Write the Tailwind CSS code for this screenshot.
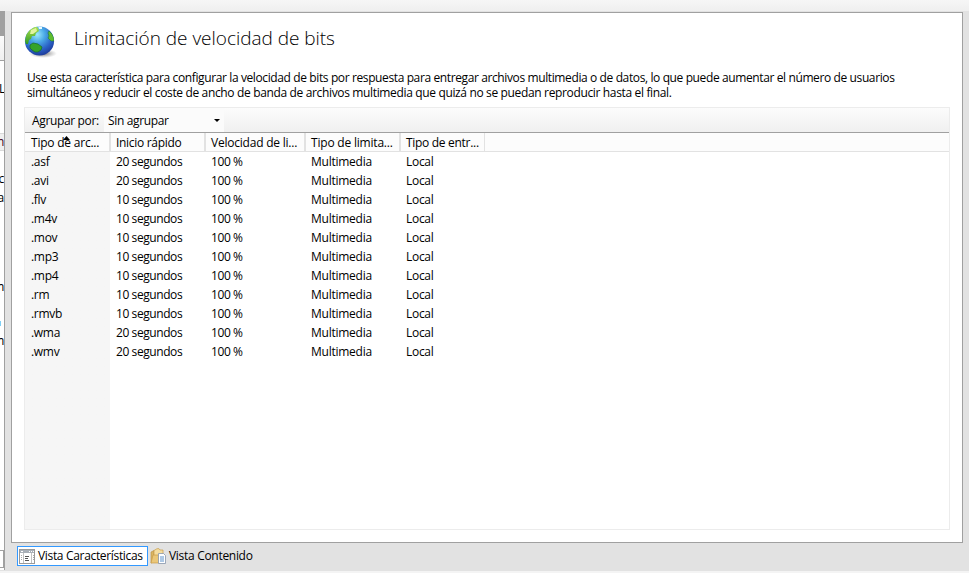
<!DOCTYPE html>
<html lang="es">
<head>
<meta charset="utf-8">
<title>Limitación de velocidad de bits</title>
<script src="https://cdn.jsdelivr.net/npm/@tailwindcss/browser@4"></script>
</head>
<body class="w-[969px] h-[573px] overflow-hidden bg-[#e2e2e2] text-black text-[12px] leading-[15px] font-['Open_Sans','Noto_Sans',sans-serif] tracking-[-0.3px] whitespace-nowrap flex flex-col">
<div class="h-[11px] shrink-0 bg-linear-to-b from-[#f6f6f6] to-[#efefef]"></div>
<div class="h-[560px] shrink-0 flex">
  <aside class="w-[5px] mr-[6px] h-[559px] shrink-0 border-r border-[#a0a0a0] bg-white overflow-hidden flex flex-col">
    <div class="h-[25px] shrink-0 bg-[#a0a0a0]"></div>
    <div class="h-[25px] shrink-0 bg-linear-to-b from-[#fcfcfc] to-[#f0f0f0] border-b border-[#a0a0a0]"></div>
    <div class="h-[72px] shrink-0 pt-[20px] -ml-px">L</div>
    <div class="h-[18px] shrink-0 bg-[#f0f0f0] border-y border-[#d9d9d9] flex justify-end text-[#400020]">n</div>
    <div class="h-[19px] mt-[20px] shrink-0 flex justify-end">c</div>
    <div class="h-[19px] shrink-0 flex justify-end">sa</div>
    <div class="h-[19px] mt-[70px] shrink-0 flex justify-end">m</div>
    <div class="w-[1px] h-[5px] mt-[23px] shrink-0 bg-[#7fd0f5]"></div>
    <div class="h-[19px] mt-[7px] shrink-0 flex justify-end">m</div>
    <div class="mt-auto h-[18px] w-[4px] mb-[2px] shrink-0 border border-l-0 border-[#a0a0a0]"></div>
  </aside>
  <div class="flex flex-col pt-px">
    <main class="w-[952px] h-[531px] bg-white border border-[#a0a0a0] pl-[12px] flex flex-col">
      <header class="h-[57px] shrink-0 flex">
        <svg class="w-[34px] h-[36px] mt-[11px] shrink-0" viewBox="0 0 34 36">
          <defs>
            <radialGradient id="sea" cx=".42" cy=".28" r=".75"><stop offset="0" stop-color="#9deafc"/><stop offset=".35" stop-color="#4aa9e6"/><stop offset=".7" stop-color="#2b62c6"/><stop offset="1" stop-color="#1c3797"/></radialGradient>
            <linearGradient id="land" x2="0" y2="1"><stop stop-color="#b5e650"/><stop offset="1" stop-color="#2e9a25"/></linearGradient>
            <radialGradient id="shade"><stop stop-color="#444" stop-opacity=".8"/><stop offset="1" stop-color="#888" stop-opacity="0"/></radialGradient>
            <clipPath id="ball"><circle cx="15.5" cy="17" r="14.6"/></clipPath>
          </defs>
          <ellipse cx="19" cy="29.5" rx="14" ry="4.5" fill="url(#shade)"/>
          <circle cx="15.5" cy="17" r="14.6" fill="url(#sea)"/>
          <g clip-path="url(#ball)">
            <path d="M1 17 2 11 6 5 11 2 14 4 15 7 12 9 11 12 8 12 7 15 5 16 4 20 2 20Z" fill="url(#land)"/>
            <path d="M7 6 12 4 13 7 9 10 6 10Z" fill="#e2f4a0"/>
            <path d="M14 2 18 3 18 5 15 5Z" fill="#e9fbff"/>
            <path d="M6 21 9 19 14 20 18 23 17 26 14 28 11 28 8 26 6 24Z" fill="#35a32b" stroke="#176d2a" stroke-width=".7"/>
            <path d="M25 7 28 10 30 14 30 17 27 17 24 14 25 12 24 9Z" fill="#5fbd2f" stroke="#1b7840" stroke-width=".6"/>
          </g>
        </svg>
        <h1 class="ml-[16px] mt-[12px] text-[19px] leading-[26px] tracking-[-0.03px] font-light">Limitación de velocidad de bits</h1>
      </header>
      <p class="h-[37px] shrink-0 pl-[3px]"><span class="tracking-[-0.385px]">Use esta característica para configurar la velocidad de bits por respuesta para entregar archivos multimedia o de datos, lo que puede aumentar el número de usuarios</span><br><span class="tracking-[-0.35px]">simultáneos y reducir el coste de ancho de banda de archivos multimedia que quizá no se puedan reproducir hasta el final.</span></p>
      <section class="w-[926px] h-[423px] shrink-0 border border-[#ececec] flex flex-col">
        <div class="h-[25px] shrink-0 bg-linear-to-b from-[#fcfcfc] to-[#f0f0f0] border-b border-[#a0a0a0] flex items-center pl-[7px]">
          <span class="w-[72px] tracking-[-0.35px]">Agrupar por:</span>
          <div class="w-[120px] h-[24px] bg-[#fbfbfb] flex items-center justify-between pl-[4px] pr-[4px]"><span class="pt-px tracking-[-0.35px]">Sin agrupar</span><svg class="w-[6px] h-[3px]" viewBox="0 0 6 3"><path d="M0 0h6L3 3z"/></svg></div>
        </div>
        <div id="head" class="relative h-[19px] shrink-0 bg-[#fcfcfc] border-b border-[#e2e2e2] flex"></div>
        <div id="rows" class="grow flex flex-col bg-linear-to-r from-[#f6f6f6] from-[85px] to-white to-[85px]"></div>
      </section>
    </main>
    <nav class="mt-[3px] ml-[6px] flex">
      <div class="w-[131px] h-[20px] border border-[#3399ff] bg-white flex items-center pl-px">
        <svg class="w-[16px] h-[15px] shrink-0" viewBox="0 0 16 15" shape-rendering="crispEdges"><path d="M.5.5h15v14H.5z" fill="#fff" stroke="#999"/><path d="M1 1h14v3H1z" fill="#a9b0b8"/><path d="M2 2h2v1H2zm8 0h1v1h-1zm2 0h1v1h-1zm2 0h1v1h-1z" fill="#fff"/><path d="M4.5 4v10M12.5 4v10" stroke="#c2c2c2"/><path d="M2 6.5h1M2 8.5h1M2 10.5h1M14 6.5h1M14 8.5h1M14 10.5h1" stroke="#aaa"/><path d="M6 7.5h4M6 9.5h3M6 11.5h4" stroke="#555"/></svg>
        <span class="ml-[3px] -mt-px tracking-[-0.33px]">Vista Características</span>
      </div>
      <div class="h-[20px] flex items-center ml-[2px]">
        <svg class="w-[16px] h-[16px] shrink-0" viewBox="0 0 16 16"><path d="M1 4 4 2.5V14l-3 1z" fill="#d9b564" stroke="#b98f3d" stroke-width=".6"/><path d="M4 2.5 7 .7h2l1 1.3h3v10H4z" fill="#f4dda0" stroke="#c99c47" stroke-width=".7"/><path d="M1 15 3 7h7v8z" fill="#eac779" stroke="#c99c47" stroke-width=".7"/><path d="M8.5 5.5h5l2 2v8h-7z" fill="#fff" stroke="#8796ab" stroke-width=".8"/><path d="M10 9h4M10 11h4M10 13h4" stroke="#4a86c5" stroke-width=".9"/></svg>
        <span class="ml-[3px] -mt-px">Vista Contenido</span>
      </div>
    </nav>
  </div>
</div>
<div class="h-[2px] shrink-0 bg-[#f4f4f4]"></div>
<script>
const widths = [85, 95, 100, 95, 85];
const headWidths = [86, 95, 100, 95, 84];
const heads = ['Tipo de arc...', 'Inicio rápido', 'Velocidad de li...', 'Tipo de limita...', 'Tipo de entr...'];
const headStyles = ['pl-[6px] border-r-2 tracking-[-0.22px]', 'pl-[5px] border-r-2', 'pl-[5px] border-r-2 tracking-[-0.22px]', 'pl-[5px] border-r-2 tracking-[-0.2px]', 'pl-[5px] border-r'];
const cellStyles = ['', 'tracking-[-0.42px]', 'tracking-[-0.4px]', 'tracking-[-0.25px]', ''];
document.getElementById('head').innerHTML = heads.map((t, i) =>
  `<div class="border-[#e2e2e2] pt-[2px] h-[18px] ${headStyles[i]}" style="width:${headWidths[i]}px">${t}</div>`).join('') +
  '<svg class="absolute left-[38px] top-[3px] w-[7px] h-[4px]" viewBox="0 0 7 4"><path d="M3.5 0 7 4H0z"/></svg>';
const data = [['.asf', 20], ['.avi', 20], ['.flv', 10], ['.m4v', 10], ['.mov', 10], ['.mp3', 10], ['.mp4', 10], ['.rm', 10], ['.rmvb', 10], ['.wma', 20], ['.wmv', 20]];
document.getElementById('rows').innerHTML = data.map(([ext, s]) =>
  '<div class="h-[19px] flex pt-[2px]">' + [ext, s + ' segundos', '100 %', 'Multimedia', 'Local'].map((t, i) =>
  `<div class="pl-[6px] ${cellStyles[i]}" style="width:${widths[i]}px">${t}</div>`).join('') + '</div>').join('');
</script>
</body>
</html>
